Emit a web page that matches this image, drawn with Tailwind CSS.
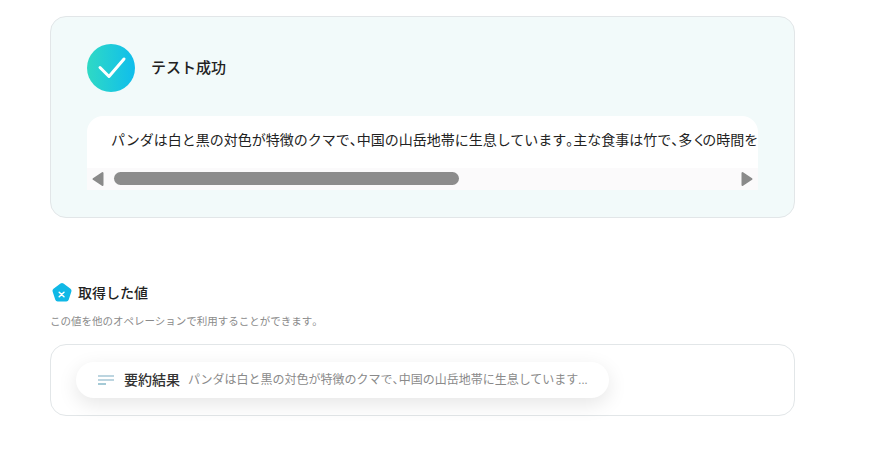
<!DOCTYPE html>
<html lang="ja">
<head>
    <meta charset="UTF-8">
    <meta name="viewport" content="width=device-width, initial-scale=1.0">
    <title>テスト成功</title>
    <script src="https://cdn.jsdelivr.net/npm/@tailwindcss/browser@4"></script>
</head>
<body class="bg-white h-[459px] overflow-hidden font-['Roboto','Noto_Sans_CJK_JP',sans-serif]">
    <div class="w-[745px] ml-[50px] pt-4">
        <!-- test result -->
        <div class="relative h-[202px] rounded-2xl border border-[#e2e6e8] bg-[#f2fafa] pt-[27px] pl-[36px] pr-[36px]">
            <div class="flex items-center gap-4 h-12">
                <div class="w-12 h-12 rounded-full bg-gradient-to-r from-[#2fd9c4] to-[#10bdec] flex items-center justify-center">
                    <svg width="48" height="48" viewBox="0 0 48 48" fill="none">
                        <path d="M13 23.5L22 32.5L37 15" stroke="white" stroke-width="3" stroke-linecap="round" stroke-linejoin="round"/>
                    </svg>
                </div>
                <h2 class="text-[15px] font-medium text-[#222]">テスト成功</h2>
            </div>
            <div class="mt-6 h-[74px] rounded-t-2xl bg-white overflow-hidden flex flex-col">
                <div class="h-[52px] pl-6 pt-[14px] overflow-hidden whitespace-nowrap text-sm leading-[20px] text-[#222]">パンダは白と黒の対色が特徴のクマで<span class="[font-feature-settings:'halt']">、</span>中国の山岳地帯に生息しています<span class="[font-feature-settings:'halt']">。</span>主な食事は竹で<span class="[font-feature-settings:'halt']">、</span>多<span class="tracking-[-4px]">く</span>の時間を食べることに費やします<span class="[font-feature-settings:'halt']">。</span></div>
                <div class="relative h-[22px] bg-[#fbfafb] flex items-center justify-between">
                    <svg class="ml-[5px]" width="12" height="16" viewBox="0 0 12 16"><path d="M10.5 2V14L1.5 8Z" fill="#8a8a8a" stroke="#8a8a8a" stroke-width="2" stroke-linejoin="round"/></svg>
                    <div class="absolute left-[27px] top-[4px] w-[345px] h-[13px] rounded-full bg-[#8c8c8c]"></div>
                    <svg class="mr-[5px]" width="12" height="16" viewBox="0 0 12 16"><path d="M1.5 2V14L10.5 8Z" fill="#8a8a8a" stroke="#8a8a8a" stroke-width="2" stroke-linejoin="round"/></svg>
                </div>
            </div>
        </div>

        <!-- acquired values -->
        <div class="mt-[64px] flex items-center gap-[5px] h-[22px]">
            <svg class="ml-[1px]" width="22" height="22" viewBox="0 0 22 22">
                <path d="M9.5 1.6a2.5 2.5 0 0 1 3 0l7 5.1a2.4 2.4 0 0 1 .9 2.7l-2.7 8.3a2.5 2.5 0 0 1-2.4 1.8H6.7a2.5 2.5 0 0 1-2.4-1.8L1.6 9.4a2.4 2.4 0 0 1 .9-2.7Z" fill="#10b8e6"/>
                <path d="M8.2 10.2l4.8 4.6M13 10.2l-4.8 4.6" stroke="white" stroke-width="1.5" stroke-linecap="round"/>
            </svg>
            <h3 class="text-[14px] font-medium text-[#222]">取得した値</h3>
        </div>
        <p class="mt-[11px] text-[10.5px] leading-[14px] text-[#8a8a8a]">この値を他のオペレーションで利用することができます<span class="[font-feature-settings:'halt']">。</span></p>
        <div class="mt-[15px] h-[72px] rounded-2xl border border-[#e2e6e8] bg-white pt-[17px] pl-[25px]">
            <div class="w-[533px] h-9 rounded-full bg-white shadow-[0_6px_20px_rgba(0,0,0,0.1)] flex items-center pl-[22px]">
                <svg width="16" height="12" viewBox="0 0 16 12">
                    <path d="M0 2h16M0 6h16" stroke="#a6c8d6" stroke-width="1.4"/>
                    <path d="M0 10h8" stroke="#7fb4c4" stroke-width="1.4"/>
                </svg>
                <span class="ml-[10px] text-sm font-medium text-[#333]">要約結果</span>
                <span class="ml-2 text-xs text-[#8a8a8a] whitespace-nowrap">パンダは白と黒の対色が特徴のクマで<span class="[font-feature-settings:'halt']">、</span>中国の山岳地帯に生息しています...</span>
            </div>
        </div>
    </div>
</body>
</html>
